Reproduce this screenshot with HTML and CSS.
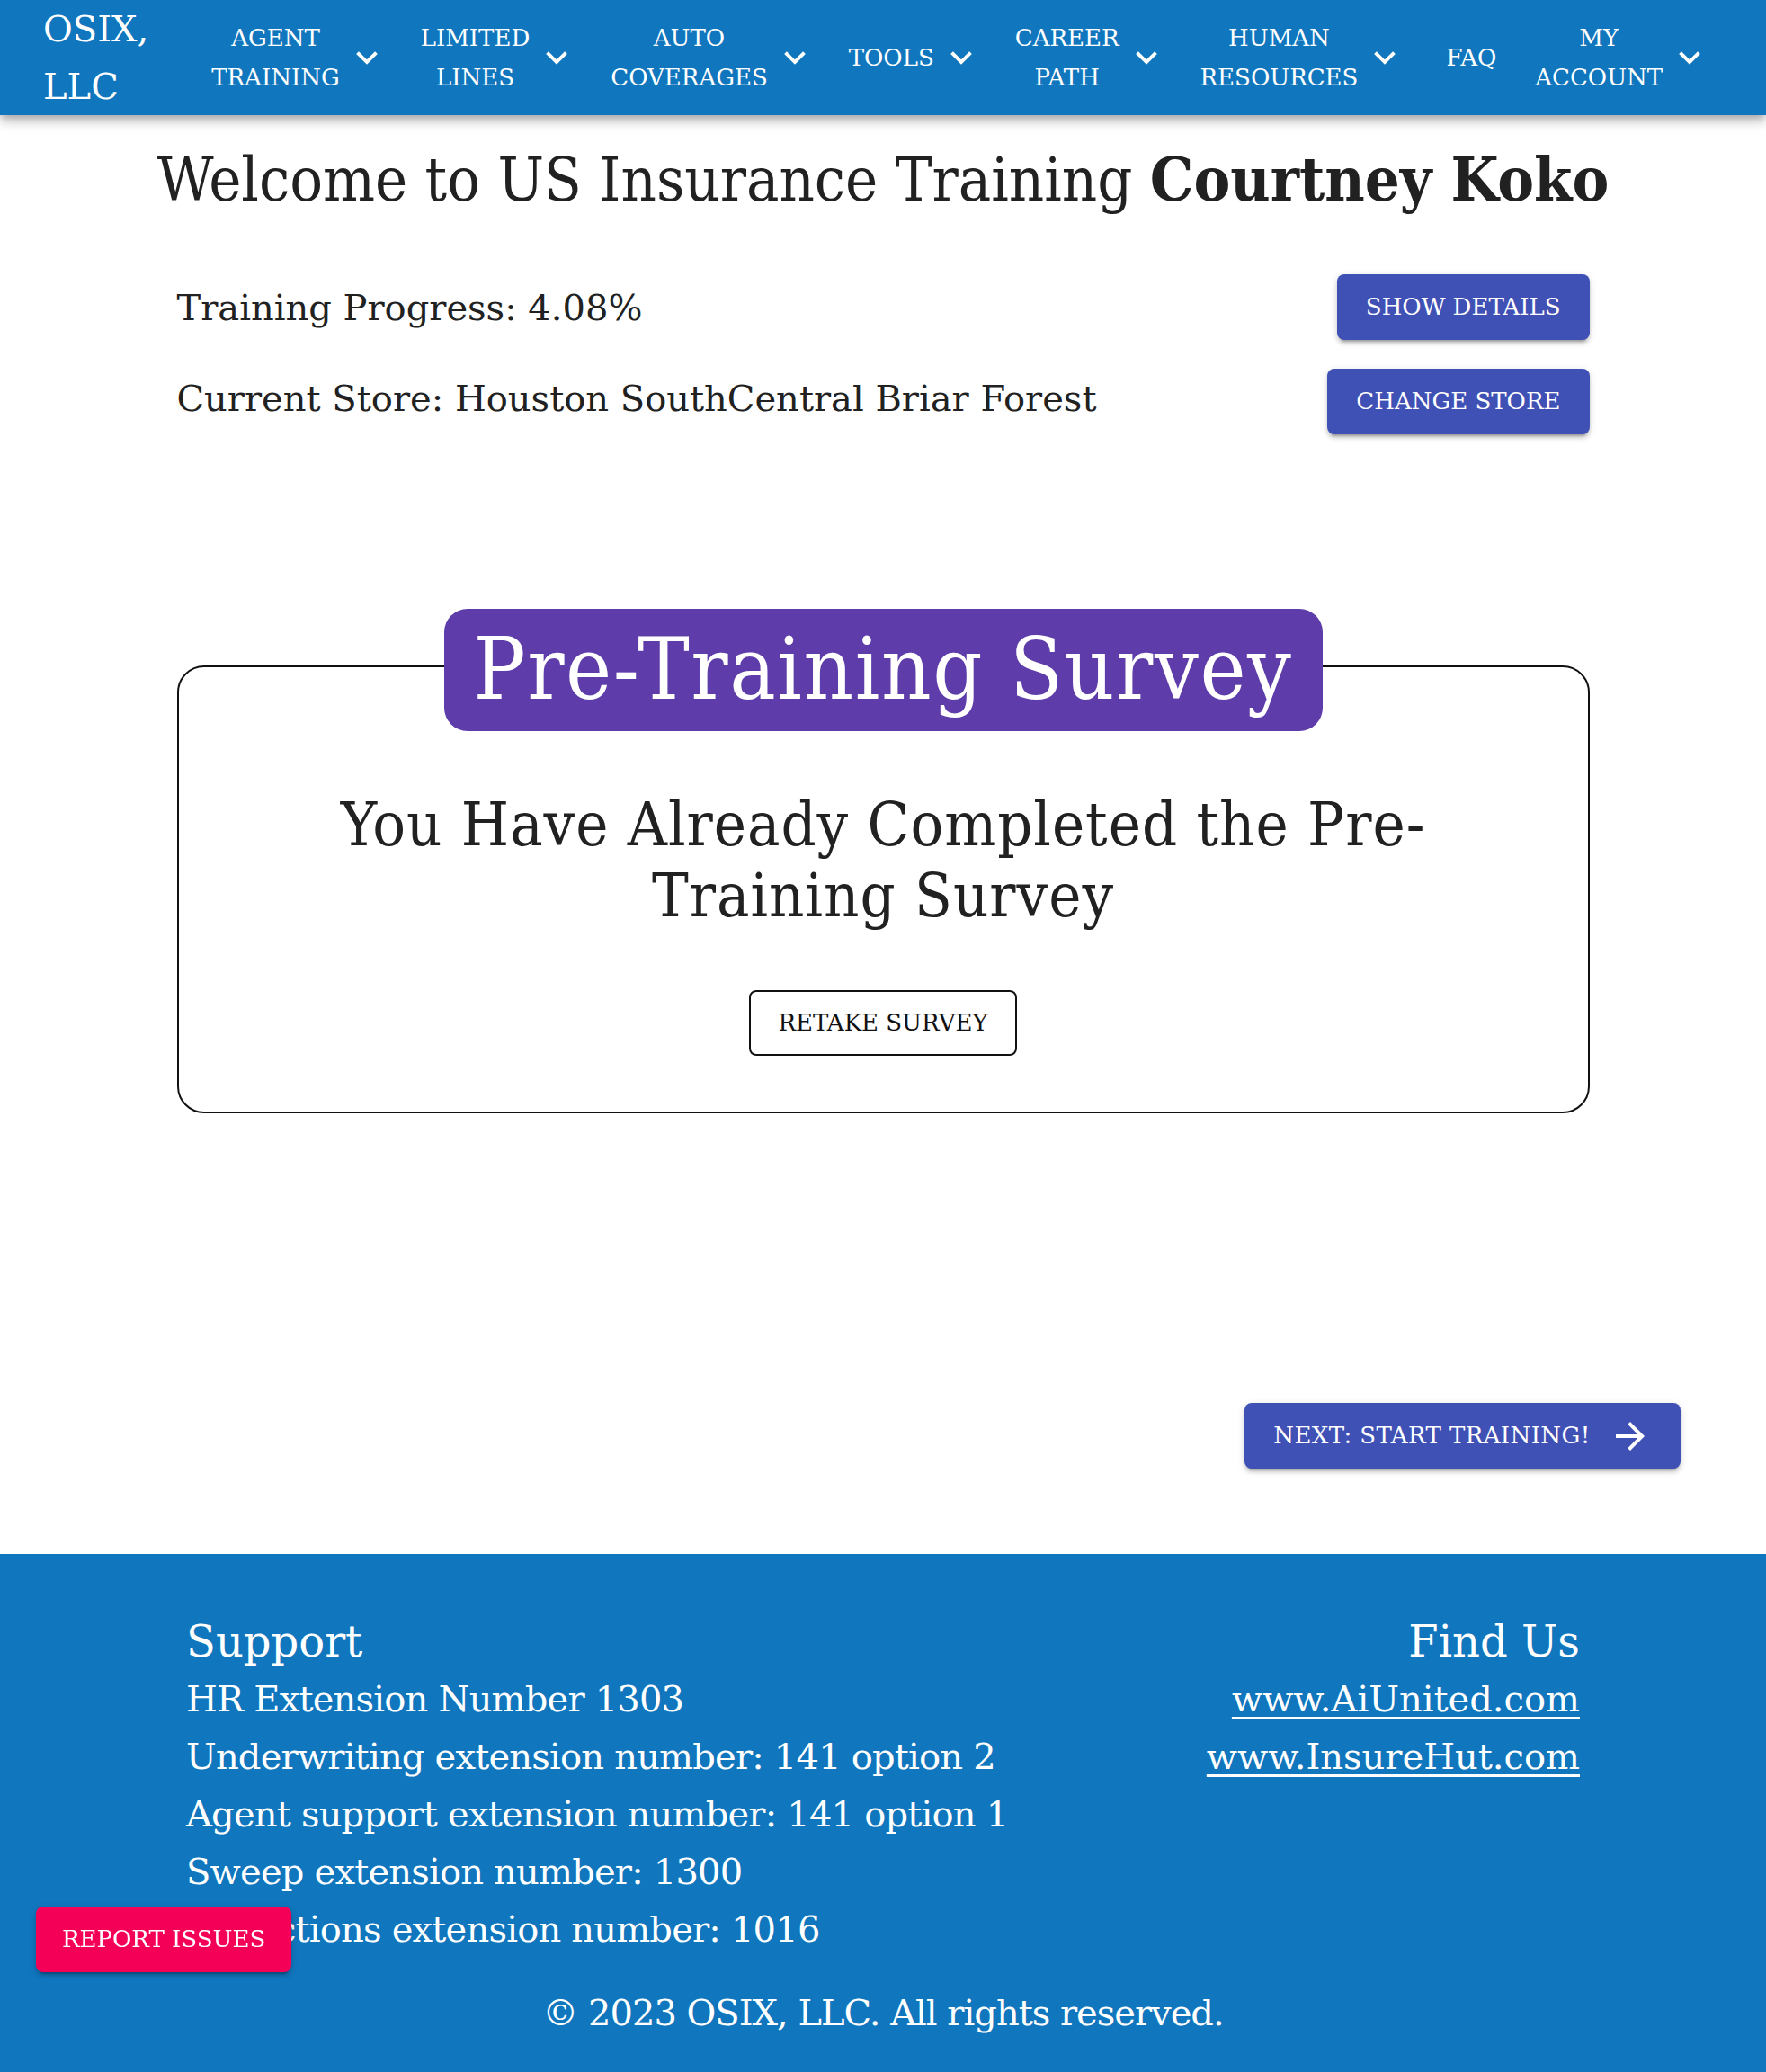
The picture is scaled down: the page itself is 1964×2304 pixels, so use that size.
FILE: index.html
```html
<!DOCTYPE html>
<html lang="en">
<head>
<meta charset="utf-8">
<title>US Insurance Training</title>
<link rel="stylesheet" href="styles.css">
</head>
<body>
<header class="appbar">
  <div class="logo">OSIX, LLC</div>
  <nav class="menu">
    <a class="menu-item"><span class="menu-label">Agent Training</span><svg class="chev" viewBox="6 8.5 12 7.6"><path d="M16.59 8.59L12 13.17 7.41 8.59 6 10l6 6 6-6z"/></svg></a>
    <a class="menu-item"><span class="menu-label">Limited Lines</span><svg class="chev" viewBox="6 8.5 12 7.6"><path d="M16.59 8.59L12 13.17 7.41 8.59 6 10l6 6 6-6z"/></svg></a>
    <a class="menu-item"><span class="menu-label">Auto Coverages</span><svg class="chev" viewBox="6 8.5 12 7.6"><path d="M16.59 8.59L12 13.17 7.41 8.59 6 10l6 6 6-6z"/></svg></a>
    <a class="menu-item"><span class="menu-label">Tools</span><svg class="chev" viewBox="6 8.5 12 7.6"><path d="M16.59 8.59L12 13.17 7.41 8.59 6 10l6 6 6-6z"/></svg></a>
    <a class="menu-item"><span class="menu-label">Career Path</span><svg class="chev" viewBox="6 8.5 12 7.6"><path d="M16.59 8.59L12 13.17 7.41 8.59 6 10l6 6 6-6z"/></svg></a>
    <a class="menu-item"><span class="menu-label">Human Resources</span><svg class="chev" viewBox="6 8.5 12 7.6"><path d="M16.59 8.59L12 13.17 7.41 8.59 6 10l6 6 6-6z"/></svg></a>
    <a class="menu-item menu-faq"><span class="menu-label">FAQ</span></a>
    <a class="menu-item"><span class="menu-label">My Account</span><svg class="chev" viewBox="6 8.5 12 7.6"><path d="M16.59 8.59L12 13.17 7.41 8.59 6 10l6 6 6-6z"/></svg></a>
  </nav>
</header>

<main class="page">
  <h1 class="welcome">Welcome to US Insurance Training <strong>Courtney Koko</strong></h1>

  <div class="info">
    <div class="info-row">
      <p class="info-text">Training Progress: 4.08%</p>
      <button class="btn btn-primary">Show Details</button>
    </div>
    <div class="info-row">
      <p class="info-text">Current Store: Houston SouthCentral Briar Forest</p>
      <button class="btn btn-primary">Change Store</button>
    </div>
  </div>

  <section class="survey">
    <h2 class="survey-label">Pre-Training Survey</h2>
    <h3 class="survey-msg">You Have Already Completed the Pre-Training Survey</h3>
    <button class="btn btn-outline">Retake Survey</button>
  </section>

  <div class="next-row">
    <button class="btn btn-primary btn-next">Next: Start Training!<svg class="arrow" viewBox="4 4 16 16"><path d="M12 4l-1.41 1.41L16.17 11H4v2h12.17l-5.58 5.59L12 20l8-8z"/></svg></button>
  </div>
</main>

<footer class="footer">
  <div class="footer-inner">
    <div class="footer-col">
      <h5 class="footer-title">Support</h5>
      <p class="footer-line">HR Extension Number 1303</p>
      <p class="footer-line">Underwriting extension number: 141 option 2</p>
      <p class="footer-line">Agent support extension number: 141 option 1</p>
      <p class="footer-line">Sweep extension number: 1300</p>
      <p class="footer-line">Collections extension number: 1016</p>
    </div>
    <div class="footer-col footer-right">
      <h5 class="footer-title">Find Us</h5>
      <p class="footer-line"><a class="footer-link" href="#">www.AiUnited.com</a></p>
      <p class="footer-line"><a class="footer-link" href="#">www.InsureHut.com</a></p>
    </div>
  </div>
  <p class="copyright">© 2023 OSIX, LLC. All rights reserved.</p>
</footer>

<button class="btn report">Report Issues</button>
</body>
</html>
```

FILE: styles.css
```css
* { box-sizing: border-box; }

html, body {
  margin: 0;
  padding: 0;
}

body {
  font-family: "DejaVu Serif", "Liberation Serif", serif;
  color: #212121;
  background: #fff;
}

/* ---------- App bar ---------- */
.appbar {
  height: 128px;
  background: #1076bd;
  color: #fff;
  display: flex;
  align-items: center;
  padding-left: 48px;
  box-shadow: 0 4px 8px -2px rgba(0,0,0,0.2), 0 8px 10px 0 rgba(0,0,0,0.14), 0 2px 20px 0 rgba(0,0,0,0.12);
  position: relative;
  z-index: 2;
}

.logo {
  width: min-content;
  font-size: 40px;
  line-height: 64px;
}

.menu {
  display: flex;
  align-items: center;
  margin-left: 70px;
  gap: 48px;
}

.menu-item {
  display: flex;
  align-items: center;
  gap: 18px;
  color: #fff;
  text-decoration: none;
}

.menu-faq {
  margin-left: 8px;
  margin-right: -5px;
}

.menu-label {
  display: block;
  width: min-content;
  text-align: center;
  text-transform: uppercase;
  font-size: 26px;
  line-height: 44px;
}

.chev {
  width: 24px;
  height: 15px;
  fill: #fff;
  flex: none;
}

/* ---------- Buttons ---------- */
.btn {
  font-family: "DejaVu Serif", "Liberation Serif", serif;
  font-size: 26px;
  line-height: 49px;
  text-transform: uppercase;
  padding: 12px 32px;
  border-radius: 8px;
  border: none;
  cursor: pointer;
  white-space: nowrap;
}

.btn-primary {
  background: #3f51b5;
  color: #fff;
  box-shadow: 0 6px 2px -4px rgba(0,0,0,0.2), 0 4px 4px 0 rgba(0,0,0,0.14), 0 2px 10px 0 rgba(0,0,0,0.12);
}

.btn-outline {
  background: #fff;
  color: #111;
  border: 2px solid #111;
  padding: 10px 30px;
}

/* ---------- Main ---------- */
.page {
  width: 1571px;
  margin: 0 auto;
}

.welcome {
  margin: 29px -190px 0;
  font-size: 68px;
  line-height: 84px;
  font-weight: 400;
  text-align: center;
  white-space: nowrap;
  font-stretch: condensed;
}

.welcome strong { font-weight: 700; }

.info {
  margin-top: 63px;
  display: flex;
  flex-direction: column;
  gap: 32px;
}

.info-row {
  display: flex;
  align-items: center;
  justify-content: space-between;
}

.info-text {
  margin: 0;
  font-size: 40px;
  line-height: 64px;
}

.info-row + .info-row .info-text {
  margin-top: -8px;
}

/* ---------- Survey card ---------- */
.survey {
  margin-top: 257px;
  border: 2px solid #111;
  border-radius: 30px;
  padding: 0 40px 62px;
  display: flex;
  flex-direction: column;
  align-items: center;
}

.survey-label {
  margin: -65px 0 0;
  width: 977px;
  background: #5e3ca9;
  color: #fff;
  font-size: 96px;
  line-height: 112px;
  font-weight: 400;
  font-stretch: condensed;
  letter-spacing: 1.6px;
  text-align: center;
  padding: 11px 0 13px;
  border-radius: 26px;
  white-space: nowrap;
}

.survey-msg {
  margin: 64px 0 0;
  max-width: 1290px;
  font-size: 68px;
  line-height: 79px;
  font-weight: 400;
  font-stretch: condensed;
  letter-spacing: 1px;
  text-align: center;
}

.survey .btn-outline {
  margin-top: 66px;
}

/* ---------- Next ---------- */
.next-row {
  display: flex;
  justify-content: flex-end;
  margin: 322px -101px 95px 0;
}

.btn-next {
  display: flex;
  align-items: center;
  gap: 28px;
  padding-right: 40px;
  letter-spacing: 0.4px;
}

.arrow {
  width: 32px;
  height: 32px;
  fill: #fff;
}

/* ---------- Footer ---------- */
.footer {
  background: #1076bd;
  color: #fff;
  padding: 65px 0 35px;
  height: 577px;
}

.footer-inner {
  width: 1550px;
  margin: 0 auto;
  display: flex;
  justify-content: space-between;
}

.footer-col { display: flex; flex-direction: column; }
.footer-right { align-items: flex-end; }

.footer-title {
  margin: 0;
  font-size: 48px;
  line-height: 64px;
  font-weight: 400;
}

.footer-line {
  margin: 0;
  font-size: 40px;
  line-height: 64px;
  letter-spacing: -0.8px;
}

.footer-right .footer-line { letter-spacing: 0; }

.footer-link {
  color: #fff;
  text-decoration: underline;
  text-underline-offset: 6px;
  text-decoration-thickness: 3px;
}

.copyright {
  margin: 29px 0 0;
  text-align: center;
  font-size: 40px;
  line-height: 64px;
  letter-spacing: -1px;
}

/* ---------- Floating report button ---------- */
.report {
  position: fixed;
  left: 40px;
  bottom: 111px;
  background: #f50057;
  color: #fff;
  padding: 12px 29px;
  box-shadow: 0 6px 2px -4px rgba(0,0,0,0.2), 0 4px 4px 0 rgba(0,0,0,0.14), 0 2px 10px 0 rgba(0,0,0,0.12);
  z-index: 5;
}
```
